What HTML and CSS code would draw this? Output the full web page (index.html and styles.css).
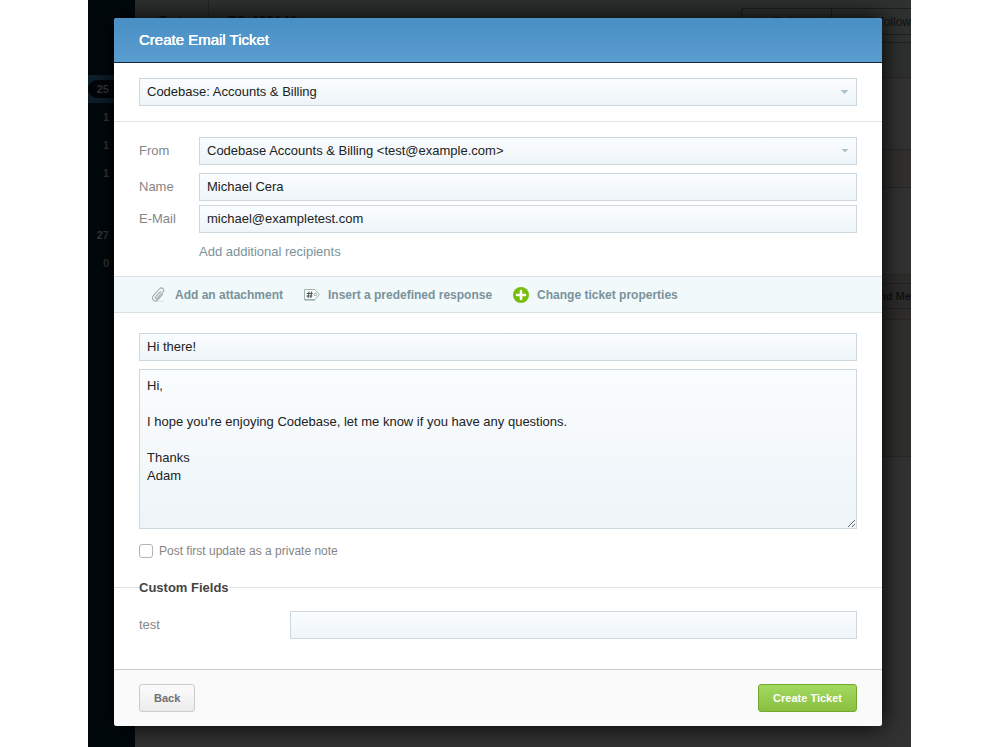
FILE: index.html
```html
<!DOCTYPE html>
<html lang="en">
<head>
<meta charset="utf-8">
<meta name="viewport" content="width=device-width, initial-scale=1">
<title>Create Email Ticket</title>
<link rel="stylesheet" href="styles.css">
</head>
<body>
<div class="stage">
  <div class="backdrop" aria-hidden="true">
    <div class="sidebar">
      <div class="count count-active"><span class="pill">25</span></div>
      <div class="count">1</div>
      <div class="count">1</div>
      <div class="count">1</div>
      <div class="count count-group">27</div>
      <div class="count">0</div>
    </div>
    <div class="page">
      <div class="topbar">
        <span class="crumb">Tests</span>
        <span class="ticket-id">TS-429140</span>
        <span class="actions"><span class="action">As Default</span><span class="action">Unfollow</span></span>
      </div>
      <div class="strip strip-head"></div>
      <div class="strip strip-tall"></div>
      <div class="strip strip-warm"></div>
      <div class="strip strip-body"></div>
      <div class="strip strip-send"><span class="send">Send Me</span></div>
      <div class="strip strip-note"></div>
      <div class="strip strip-rest"></div>
    </div>
  </div>

  <form class="modal">
    <header class="modal-head"><h1 class="title">Create Email Ticket</h1></header>

    <div class="section">
      <select class="field" aria-label="Department"><option>Codebase: Accounts &amp; Billing</option></select>
    </div>

    <div class="section section-sender">
      <div class="row row-from">
        <label class="label" for="from">From</label>
        <select class="field" id="from"><option>Codebase Accounts &amp; Billing &lt;test@example.com&gt;</option></select>
      </div>
      <div class="row">
        <label class="label" for="name">Name</label>
        <input class="field" id="name" type="text" value="Michael Cera">
      </div>
      <div class="row">
        <label class="label" for="email">E-Mail</label>
        <input class="field" id="email" type="text" value="michael@exampletest.com">
      </div>
      <a class="add-link" href="#">Add additional recipients</a>
    </div>

    <nav class="toolbar">
      <a class="tool" href="#">
        <svg class="icon" viewBox="0 0 16 16" fill="none" stroke-linecap="round" aria-hidden="true">
          <path d="M5 14.500h8" stroke="#dce3e3"/>
          <path transform="translate(7.500 7.500) rotate(42)" d="M3 -3V4.500a3 3 0 0 1-6 0V-5a2.300 2.300 0 0 1 4.600 0V4a1 1 0 0 1-2 0V-3.500" stroke="#a0a6a6"/>
        </svg>
        Add an attachment
      </a>
      <a class="tool" href="#">
        <svg class="icon" viewBox="0 0 16 16" fill="none" aria-hidden="true">
          <path d="M.5 2.500h10.500l4.500 5-4.500 5H.5z" fill="#fff" stroke="#9fb3ad"/>
          <path d="M.5 13h10.500" stroke="#8fa79f"/>
          <path d="M5 4.500 4 11M7.700 4.500 6.700 11M2.700 6.500h6M2.400 9h6" stroke="#555" stroke-width="1.200"/>
          <circle cx="11.500" cy="7.500" r="1.300" stroke="#8fa79f"/>
        </svg>
        Insert a predefined response
      </a>
      <a class="tool" href="#">
        <svg class="icon" viewBox="0 0 16 16" aria-hidden="true">
          <circle cx="8" cy="8" r="8" fill="#77bd0b"/>
          <path d="M8 4v8M4 8h8" stroke="#fff" stroke-width="2.600" stroke-linecap="round"/>
        </svg>
        Change ticket properties
      </a>
    </nav>

    <div class="section section-message">
      <input class="field" type="text" aria-label="Subject" value="Hi there!">
      <textarea class="field message" aria-label="Message">Hi,

I hope you're enjoying Codebase, let me know if you have any questions.

Thanks
Adam</textarea>
      <label class="check"><input class="box" type="checkbox">Post first update as a private note</label>
    </div>

    <h2 class="divider"><span class="divider-text">Custom Fields</span></h2>

    <div class="section section-custom">
      <div class="row">
        <label class="label label-wide" for="custom">test</label>
        <input class="field" id="custom" type="text">
      </div>
    </div>

    <footer class="modal-foot">
      <button class="button" type="button">Back</button>
      <button class="button button-primary" type="button">Create Ticket</button>
    </footer>
  </form>
</div>
</body>
</html>
```
FILE: styles.css
```css
* {
  box-sizing: border-box;
}

body {
  margin: 0;
  padding: 0 89px 0 88px;
  background: #fff;
  color: #222;
  font: 13px/18px "Liberation Sans", Arial, sans-serif;
}

.stage {
  position: relative;
  display: flow-root;
  min-height: 100vh;
  overflow: hidden;
}

/* Dimmed application behind the dialog */
.backdrop {
  position: absolute;
  inset: 0;
  display: flex;
  overflow: hidden;
  background: #323232;
}

.sidebar {
  flex: 0 0 47px;
  padding-top: 75px;
  background: #01080c;
  color: #36393b;
  font-size: 11px;
  font-weight: bold;
}

.count {
  width: 26px;
  height: 28px;
  padding-right: 5px;
  line-height: 28px;
  text-align: right;
}

.count-active {
  width: 47px;
  padding: 5px 0;
  background: #0d1f2b;
}

.pill {
  display: block;
  width: 34px;
  height: 18px;
  padding-right: 13px;
  border-radius: 9px;
  background: #010508;
  line-height: 18px;
}

.count-group {
  margin-top: 34px;
}

.page {
  flex: 1;
  min-width: 0;
}

.topbar {
  display: flex;
  height: 43px;
  padding-left: 24px;
  border-bottom: 1px solid #202222;
  background: #2f3131;
  color: #121212;
  font-size: 12px;
  font-weight: bold;
  line-height: 43px;
}

.crumb {
  width: 50px;
  border-right: 1px solid #252727;
}

.ticket-id {
  padding-left: 19px;
  font-size: 14px;
}

.actions {
  display: flex;
  height: 27px;
  margin: 8px 0 0 auto;
  border: 1px solid #1d1f1f;
  border-right: 0;
  border-radius: 3px 0 0 3px;
  font-weight: normal;
  line-height: 26px;
}

.action {
  width: 89px;
  padding-left: 14px;
}

.action + .action {
  width: 80px;
  padding-left: 0;
  border-left: 1px solid #1d1f1f;
  text-align: right;
}

.strip {
  border-bottom: 1px solid #272727;
}

.strip-head {
  height: 35px;
  background: #2e3030;
}

.strip-tall {
  height: 72px;
}

.strip-warm {
  height: 38px;
  background: #31302e;
}

.strip-body {
  height: 87px;
}

.strip-send {
  height: 45px;
  padding: 8px 0 10px;
  background: #2e2d2a;
}

.send {
  display: block;
  height: 26px;
  border: solid #222;
  border-width: 1px 0;
  background: #2c2c2c;
  color: #111;
  font-size: 11px;
  font-weight: bold;
  line-height: 25px;
  text-align: right;
}

.strip-note {
  height: 137px;
  background: #2f2f2c;
}

.strip-rest {
  border: 0;
}

/* Dialog */
.modal {
  position: relative;
  margin: 18px 29px 21px 26px;
  border-radius: 3px;
  background: #fff;
  box-shadow: 0 0 25px #000;
}

.modal-head {
  padding: 13px 25px;
  border-bottom: 1px solid #14273a;
  border-radius: 3px 3px 0 0;
  background: linear-gradient(#498fc5, #5a9dcf);
}

.title {
  margin: 0;
  color: #fff;
  font-size: 15px;
  font-weight: normal;
  line-height: 18px;
  text-shadow: 0 0 0 #fff, 0 0 0 #fff;
}

.section {
  padding: 15px 25px;
  border-bottom: 1px solid #dfe3e4;
}

.section-sender {
  display: grid;
  gap: 4px;
  border: 0;
}

.row {
  display: flex;
  align-items: center;
}

.row-from {
  margin-bottom: 4px;
}

.label {
  flex: 0 0 60px;
  color: #858585;
}

.label-wide {
  flex-basis: 151px;
}

.field {
  display: block;
  flex: 1;
  width: 100%;
  min-width: 0;
  height: 28px;
  margin: 0;
  padding: 0 7px 2px;
  border: 1px solid #ccd8de;
  border-radius: 0;
  background: linear-gradient(#fafdff, #eef4f8);
  color: #222;
  font: inherit;
}

select.field {
  padding-bottom: 0;
  appearance: none;
  background:
    linear-gradient(135deg, #afc1ca 50%, transparent 50%) right 7px center / 4px 4px no-repeat,
    linear-gradient(225deg, #afc1ca 50%, transparent 50%) right 11px center / 4px 4px no-repeat,
    linear-gradient(#fafdff, #eef4f8);
}

.add-link {
  margin: 6px 0 0 60px;
  justify-self: start;
  color: #7a929a;
  text-decoration: none;
}

.toolbar {
  display: flex;
  flex-wrap: wrap;
  gap: 0 21px;
  padding: 0 37px;
  border: solid #d8e2e6;
  border-width: 1px 0;
  background: #f1f9fb;
}

.tool {
  display: flex;
  align-items: center;
  gap: 8px;
  height: 35px;
  color: #7a929a;
  font-size: 12px;
  font-weight: bold;
  text-decoration: none;
}

.icon {
  width: 16px;
  height: 16px;
}

.section-message {
  display: grid;
  gap: 8px;
  padding: 20px 25px 19px;
  border: 0;
}

.field.message {
  height: 160px;
  padding: 7px;
  line-height: 18px;
  resize: vertical;
}

.check {
  display: flex;
  align-items: center;
  gap: 6px;
  justify-self: start;
  margin-top: 5px;
  color: #858585;
  font-size: 12px;
}

.box {
  appearance: none;
  width: 14px;
  height: 14px;
  margin: 0;
  border: 1px solid #b4b4b4;
  border-radius: 3px;
  background: #fff;
}

.box:checked {
  background: #498fc5;
}

.divider {
  display: flex;
  align-items: center;
  margin: 0;
  color: #444;
  font-size: 13px;
  line-height: 17px;
}

.divider::before,
.divider::after {
  content: "";
  flex: 0 0 25px;
  height: 1px;
  background: #dfe1e2;
}

.divider::after {
  flex: 1;
}

.section-custom {
  padding: 15px 25px 30px;
  border: 0;
}

.modal-foot {
  display: flex;
  justify-content: space-between;
  padding: 14px 25px;
  border-top: 1px solid #ccc;
  border-radius: 0 0 3px 3px;
  background: #fafafa;
}

.button {
  height: 28px;
  padding: 0 14px;
  border: 1px solid #ccc;
  border-radius: 3px;
  background: linear-gradient(#fbfbfb, #ececec);
  color: #707070;
  font: bold 11px/18px "Liberation Sans", Arial, sans-serif;
}

.button-primary {
  border-color: #72ab2b;
  background: linear-gradient(#a2d95f, #8abf41);
  color: #fff;
}
```
